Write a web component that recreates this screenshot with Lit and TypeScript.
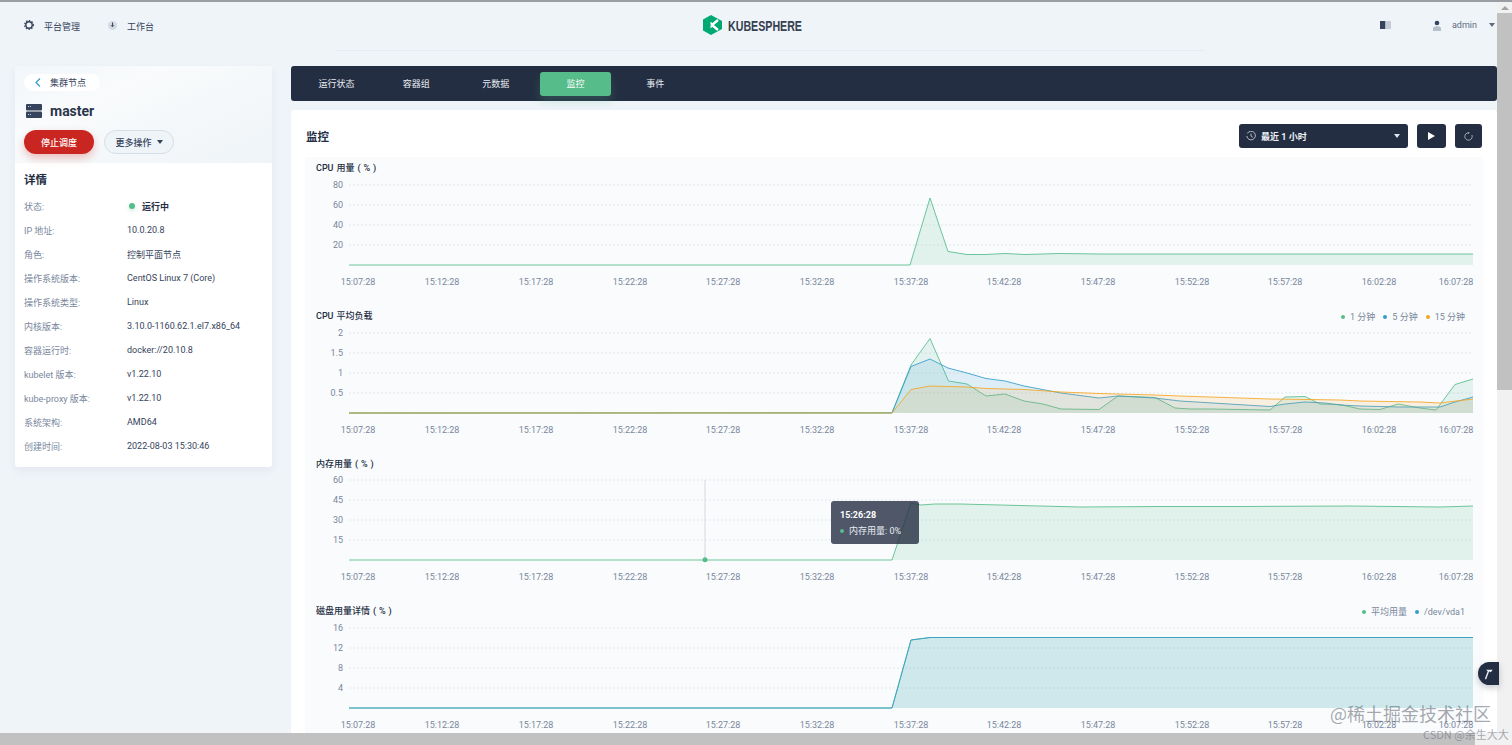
import { LitElement, html, css, svg } from "lit";
import { customElement } from "lit/decorators.js";

type Pt = [number, number];
interface Series { color: string; fill: number; pts: Pt[]; }
interface Chart {
  title: string; top: number; base: number;
  ticks: [string, number][];
  legend: [string, string][];
  series: Series[];
}

const GREEN = "#55bc8a", BLUE = "#329dce", ORANGE = "#f5a623";
const XL: [string, number][] = [
  ["15:07:28", 358], ["15:12:28", 442], ["15:17:28", 536], ["15:22:28", 630],
  ["15:27:28", 723], ["15:32:28", 817], ["15:37:28", 911], ["15:42:28", 1004],
  ["15:47:28", 1098], ["15:52:28", 1192], ["15:57:28", 1285], ["16:02:28", 1379], ["16:07:28", 1456],
];

const CHARTS: Chart[] = [
  {
    title: "CPU 用量 ( % )", top: 157, base: 265,
    ticks: [["80", 185], ["60", 205], ["40", 225], ["20", 245]], legend: [],
    series: [{ color: GREEN, fill: 0.14, pts: [[349, 265], [910, 265], [930, 198], [948, 251.5], [967, 254.5], [985, 254.5], [1005, 253.5], [1025, 254.5], [1060, 253.5], [1100, 254], [1150, 254], [1250, 254], [1350, 254], [1473, 254]] }],
  },
  {
    title: "CPU 平均负载", top: 305, base: 413,
    ticks: [["2", 333], ["1.5", 353], ["1", 373], ["0.5", 393]],
    legend: [["1 分钟", GREEN], ["5 分钟", BLUE], ["15 分钟", ORANGE]],
    series: [
      { color: GREEN, fill: 0.13, pts: [[349, 413], [892, 412.7], [911, 365], [930, 338.5], [948.5, 381], [967, 384], [986, 396], [1005, 394], [1024, 401], [1043, 404], [1061, 409], [1099, 409.5], [1118, 396], [1155, 397.5], [1175, 408], [1190, 409], [1210, 409], [1270, 410], [1285, 397], [1305, 396.5], [1320, 404], [1340, 404.5], [1360, 409], [1380, 409.5], [1398, 404], [1420, 408], [1436, 410], [1455, 384.5], [1473, 379]] },
      { color: BLUE, fill: 0.13, pts: [[349, 413], [892, 413], [911, 366.5], [930, 359], [948, 368], [967, 373], [986, 378.5], [1005, 381], [1024, 386], [1061, 393], [1099, 398], [1118, 396], [1155, 398], [1180, 401], [1270, 406.5], [1285, 404], [1305, 402], [1325, 403], [1340, 405], [1360, 406], [1400, 407], [1440, 407], [1455, 402], [1473, 397]] },
      { color: ORANGE, fill: 0.13, pts: [[349, 413], [892, 413], [911, 389.5], [930, 386], [967, 387], [986, 388.5], [1024, 389.5], [1061, 392], [1099, 393.5], [1155, 395], [1180, 396], [1270, 399], [1310, 399.5], [1340, 400], [1360, 401], [1420, 402], [1440, 403], [1473, 399]] },
    ],
  },
  {
    title: "内存用量 ( % )", top: 453, base: 560,
    ticks: [["60", 480], ["45", 500], ["30", 520], ["15", 540]], legend: [],
    series: [{ color: GREEN, fill: 0.15, pts: [[349, 560], [892, 560], [911, 503], [921, 505], [935, 504], [960, 504], [1000, 505], [1080, 507], [1160, 506.5], [1240, 506.5], [1350, 506], [1440, 507], [1473, 506]] }],
  },
  {
    title: "磁盘用量详情 ( % )", top: 600, base: 708,
    ticks: [["16", 628], ["12", 648], ["8", 668], ["4", 688]],
    legend: [["平均用量", GREEN], ["/dev/vda1", BLUE]],
    series: [
      { color: GREEN, fill: 0.12, pts: [[349, 708], [892, 708], [911, 640], [930, 637.5], [1473, 637.5]] },
      { color: BLUE, fill: 0.12, pts: [[349, 708], [892, 708], [911, 640], [930, 637.5], [1473, 637.5]] },
    ],
  },
];

const DETAILS: [string, string][] = [
  ["IP 地址:", "10.0.20.8"], ["角色:", "控制平面节点"], ["操作系统版本:", "CentOS Linux 7 (Core)"],
  ["操作系统类型:", "Linux"], ["内核版本:", "3.10.0-1160.62.1.el7.x86_64"], ["容器运行时:", "docker://20.10.8"],
  ["kubelet 版本:", "v1.22.10"], ["kube-proxy 版本:", "v1.22.10"], ["系统架构:", "AMD64"], ["创建时间:", "2022-08-03 15:30:46"],
];

@customElement("app-root")
export class AppRoot extends LitElement {
  static styles = css`
    :host { display: grid; grid-template-columns: 1497px 15px; grid-template-rows: 733px 12px; width: 1512px; height: 745px; overflow: hidden; background: #eff4f9; font-family: Roboto, "Noto Sans CJK SC", sans-serif; font-size: 9px; color: #242e42; position: relative; }
    .main { grid-column: 1; grid-row: 1; overflow: hidden; border-top: 2px solid #9a9ea3; box-sizing: border-box; }
    .top { height: 49px; padding-bottom: 3px; box-sizing: border-box; display: grid; grid-template-columns: 1fr auto 1fr; align-items: center; position: relative; }
    .top::after { content: ""; position: absolute; left: 335px; width: 870px; bottom: 0; height: 1px; background: #e6ebf1; }
    .nav { display: flex; align-items: center; padding-left: 24px; gap: 28px; color: #36435c; }
    .nav-item { display: flex; align-items: center; gap: 10px; }
    .nav-item span { padding-top: 3px; }
    .logo { display: flex; align-items: center; gap: 5px; padding-left: 9px; }
    .logo b { display: block; width: 75px; white-space: nowrap; font: 700 15px "Liberation Sans", sans-serif; color: #36404f; transform: scaleX(.71); transform-origin: left center; }
    .user { display: flex; justify-content: flex-end; align-items: center; color: #5f6b7d; padding-right: 2px; }
    .user .book { margin-right: 42px; }
    .user .name { margin: 0 12px 0 11px; }
    .body { display: flex; gap: 19px; padding: 15px 0 0 15px; }
    .side { width: 257px; height: 401px; background: #fff; border-radius: 3px; box-shadow: 0 4px 10px rgba(36,46,66,.06); flex: none; }
    .banner { height: 97px; box-sizing: border-box; padding: 8px 9px 0; background: linear-gradient(155deg, #f2f6fa 0%, #f9fbfc 32%, #f5f8fa 58%, #eff4f8 100%); }
    .back { display: inline-flex; align-items: center; gap: 9px; height: 17px; width: 76px; box-sizing: border-box; padding-left: 11px; background: #fff; border-radius: 9px; color: #36435c; }
    .host { display: flex; align-items: center; gap: 8px; margin: 10px 0 0 2px; font-size: 14px; font-weight: 700; line-height: 20px; color: #2b364b; }
    .acts { display: flex; gap: 10px; margin-top: 9px; }
    .btn { width: 70px; height: 24px; border-radius: 12px; display: flex; align-items: center; justify-content: center; box-sizing: border-box; font-weight: 500; }
    .red { background: #ca2621; color: #fff; box-shadow: 0 4px 8px rgba(202,38,33,.28); }
    .more { background: #eff4f9; border: 1px solid #d8dee5; color: #36435c; gap: 5px; }
    .caret { width: 0; height: 0; border: 3.5px solid transparent; border-top: 4px solid currentColor; border-bottom: 0; }
    .details { padding: 9px 9px 0; }
    .details h3 { margin: 0 0 6px; font-size: 11.5px; font-weight: 600; line-height: 16px; }
    .row { display: grid; grid-template-columns: 103px 1fr; height: 24px; align-items: center; color: #36435c; }
    .row .k { color: #79879c; }
    .status { display: flex; align-items: center; gap: 7px; font-weight: 600; padding-left: 2px; color: #242e42; }
    .status i { width: 6px; height: 6px; background: #55bc8a; border-radius: 50%; box-shadow: 0 2px 4px rgba(85,188,138,.3); }
    .content { width: 1206px; flex: none; }
    .tabs { height: 35px; background: #242e42; border-radius: 3px; display: flex; align-items: center; gap: 8.7px; padding-left: 10px; box-sizing: border-box; }
    .tab { width: 71px; height: 24px; display: flex; align-items: center; justify-content: center; color: #e8edf3; border-radius: 3px; }
    .tab.on { background: #55bc8a; color: #fff; box-shadow: 0 6px 10px rgba(85,188,138,.2); }
    .card { margin-top: 9px; background: #fff; border-radius: 3px 3px 0 0; padding: 14px 14px 0; height: 640px; box-sizing: border-box; }
    .head { display: flex; align-items: center; height: 24px; margin-bottom: 9px; gap: 9px; padding-right: 1px; }
    .head h2 { margin: 0 auto 0 1px; font-size: 11.5px; font-weight: 600; }
    .dark { height: 24px; background: #242e42; border-radius: 3px; display: flex; align-items: center; color: #fff; box-sizing: border-box; justify-content: center; }
    .sel { width: 169px; justify-content: flex-start; padding: 0 8px 0 7px; gap: 5px; font-weight: 700; color: #eef2f6; }
    .sel .caret { margin-left: auto; color: #dfe5ec; }
    .sq { width: 29px; }
    .sq.r { width: 27px; }
    .chart { background: #f9fbfd; position: relative; height: 148px; }
    .chart:nth-last-child(2) { height: 147px; }
    .ch { height: 20px; display: flex; align-items: center; justify-content: space-between; padding: 0 18px 0 11px; }
    .ch b { font-weight: 500; color: #242e42; word-spacing: .7px; }
    .legend { display: flex; gap: 8px; color: #79879c; padding-top: 3px; }
    .legend span { display: flex; align-items: center; gap: 5px; }
    .legend i { width: 4px; height: 4px; border-radius: 50%; }
    svg.plot { display: block; width: 1178px; height: 128px; }
    svg.plot text { font: 9px Roboto, sans-serif; fill: #79879c; }
    .tip { position: absolute; left: 526px; top: 48px; width: 88px; height: 43px; box-sizing: border-box; padding: 6px 9px; border-radius: 3px; background: rgba(36,46,66,.8); color: #e8edf3; line-height: 16px; }
    .tip b { display: block; color: #fff; font-weight: 700; }
    .tip span { display: flex; align-items: center; gap: 5px; }
    .tip i { width: 4px; height: 4px; border-radius: 50%; background: #55bc8a; }
    .vbar { grid-column: 2; grid-row: 1 / 3; background: #f1f1f1; border-top: 2px solid #9a9ea3; display: flex; flex-direction: column; align-items: center; }
    .vbar .thumb { width: 15px; height: 377px; background: #c1c1c1; flex: none; margin-top: 3px; }
    .up { width: 0; height: 0; border: 4px solid transparent; border-bottom: 4px solid #a3a3a3; border-top: 0; margin-top: 4px; }
    .hbar { grid-column: 1; grid-row: 2; background: #f1f1f1; }
    .hbar div { width: 1475px; height: 12px; background: #c1c1c1; }
    .hammer { position: absolute; left: 1478px; top: 662px; width: 21px; height: 23px; background: #242e42; border-radius: 12px 0 0 12px; display: flex; align-items: center; justify-content: center; box-shadow: 0 3px 6px rgba(36,46,66,.25); }
    .wm1 { position: absolute; left: 1330px; top: 702px; font: 18px/22px "Noto Sans CJK SC", sans-serif; color: rgba(90,95,105,.55); white-space: nowrap; }
    .wm2 { position: absolute; left: 1423px; top: 727px; font: 11px/14px "Noto Sans CJK SC", sans-serif; color: rgba(110,115,125,.6); white-space: nowrap; }
  `;

  private plot(c: Chart) {
    const vb = `305 ${c.top + 20} 1178 128`;
    const labelY = c.base + 19.5;
    return html`<svg class="plot" viewBox=${vb}>
      ${c.ticks.map(([t, y]) => svg`
        <line x1="349" x2="1473" y1=${y} y2=${y} stroke="#e1e6ec" stroke-dasharray="2 2"></line>
        <text x="343" y=${y + 3} text-anchor="end">${t}</text>`)}
      ${c.series.map((s) => svg`
        <polygon points=${`${s.pts.map((p) => p.join(",")).join(" ")} 1473,${c.base} 349,${c.base}`} fill=${s.color} fill-opacity=${s.fill}></polygon>
        <polyline points=${s.pts.map((p) => p.join(",")).join(" ")} fill="none" stroke=${s.color} stroke-opacity=".85" stroke-width="1"></polyline>`)}
      ${XL.map(([t, x]) => svg`<text x=${x} y=${labelY} text-anchor="middle">${t}</text>`)}
      ${c.top === 453 ? svg`
        <line x1="705" x2="705" y1="480" y2="560" stroke="#d5dbe2"></line>
        <circle cx="705" cy="559.7" r="2.5" fill="#55bc8a"></circle>` : ""}
    </svg>`;
  }

  render() {
    return html`
      <div class="main">
        <header class="top">
          <nav class="nav">
            <div class="nav-item">
              <svg width="10" height="10" viewBox="0 0 10 10"><circle cx="5" cy="5" r="3.2" fill="none" stroke="#36435c" stroke-width="1.4"></circle><circle cx="5" cy="5" r="4.3" fill="none" stroke="#36435c" stroke-width="1.3" stroke-dasharray="1.4 1.4"></circle></svg>
              <span>平台管理</span>
            </div>
            <div class="nav-item">
              <svg width="9" height="9" viewBox="0 0 9 9"><circle cx="4.5" cy="4.5" r="4.5" fill="#d5dbe2"></circle><path d="M4.5 1.5v3.4M3 4.2l1.5 1.6L6 4.2" fill="none" stroke="#36435c"></path></svg>
              <span>工作台</span>
            </div>
          </nav>
          <div class="logo">
            <svg width="20" height="20" viewBox="0 0 20 20"><path d="M8 0l11 6v8L8 20 0 15.5v-11z" fill="#00a971"></path><path d="M15 5l-6 5 6 5" fill="none" stroke="#fff" stroke-width="2.4"></path><path d="M6 2v16" stroke="#00a971" stroke-width="2"></path><path d="M7.5 7.5L10 10l-2.500 2.500" fill="none" stroke="#fff" stroke-width="1.6"></path></svg>
            <b>KUBESPHERE</b>
          </div>
          <div class="user">
            <svg class="book" width="11" height="8" viewBox="0 0 11 8"><rect width="5.500" height="8" fill="#36435c"></rect><rect x="5.500" width="5.500" height="8" fill="#c5ccd6"></rect></svg>
            <svg width="8" height="11" viewBox="0 0 8 11"><circle cx="4" cy="3" r="2.300" fill="#36435c"></circle><path d="M0 11V8.500C0 7 1.500 6.200 4 6.200S8 7 8 8.500V11z" fill="#b6bec9"></path></svg>
            <span class="name">admin</span>
            <span class="caret"></span>
          </div>
        </header>
        <div class="body">
          <aside class="side">
            <div class="banner">
              <div class="back">
                <svg width="6" height="9" viewBox="0 0 6 9"><path d="M5 .5L1 4.500l4 4" fill="none" stroke="#329dce" stroke-width="1.200"></path></svg>
                集群节点
              </div>
              <div class="host">
                <svg width="16" height="14" viewBox="0 0 16 14"><rect width="16" height="6.500" rx="1" fill="#36435c"></rect><rect y="7.500" width="16" height="6.500" rx="1" fill="#36435c"></rect><path d="M2 2.500h3M2 10.500h3" stroke="#c5ccd6" stroke-dasharray="1 1"></path></svg>
                master
              </div>
              <div class="acts">
                <div class="btn red">停止调度</div>
                <div class="btn more">更多操作 <span class="caret"></span></div>
              </div>
            </div>
            <div class="details">
              <h3>详情</h3>
              <div class="row"><span class="k">状态:</span><span class="status"><i></i>运行中</span></div>
              ${DETAILS.map(([k, v]) => html`<div class="row"><span class="k">${k}</span><span>${v}</span></div>`)}
            </div>
          </aside>
          <section class="content">
            <div class="tabs">
              <div class="tab">运行状态</div>
              <div class="tab">容器组</div>
              <div class="tab">元数据</div>
              <div class="tab on">监控</div>
              <div class="tab">事件</div>
            </div>
            <div class="card">
              <div class="head">
                <h2>监控</h2>
                <div class="dark sel">
                  <svg width="10" height="10" viewBox="0 0 10 10"><path d="M1.300 2.500A4.300 4.300 0 1 1 .8 5" fill="none" stroke="#c5ccd6" stroke-width=".9"></path><path d="M5 2.500V5l1.800 1.300" fill="none" stroke="#c5ccd6" stroke-width=".9"></path></svg>
                  最近 1 小时
                  <span class="caret"></span>
                </div>
                <div class="dark sq"><svg width="7" height="8" viewBox="0 0 7 8"><path d="M0 0l7 4-7 4z" fill="#fff"></path></svg></div>
                <div class="dark sq r"><svg width="9" height="9" viewBox="0 0 9 9"><path d="M7.900 3A3.700 3.700 0 1 1 4.800 .8" fill="none" stroke="#aeb7c3" stroke-width=".9"></path><path d="M3.800 0L5.400 .8 4 1.900" fill="none" stroke="#aeb7c3" stroke-width=".7"></path></svg></div>
              </div>
              ${CHARTS.map((c) => html`
                <div class="chart">
                  <div class="ch">
                    <b>${c.title}</b>
                    ${c.legend.length ? html`<div class="legend">${c.legend.map(([t, col]) => html`<span><i style="background:${col}"></i>${t}</span>`)}</div>` : ""}
                  </div>
                  ${this.plot(c)}
                  ${c.top === 453 ? html`<div class="tip"><b>15:26:28</b><span><i></i>内存用量: 0%</span></div>` : ""}
                </div>`)}
            </div>
          </section>
        </div>
      </div>
      <div class="vbar"><span class="up"></span><div class="thumb"></div></div>
      <div class="hbar"><div></div></div>
      <div class="hammer"><svg width="11" height="12" viewBox="0 0 9 10"><path d="M2.500 1.500h5.500L6.500 3.500 5 3 2.500 9.500 1.500 9 3.800 2.800z" fill="#e8edf3"></path></svg></div>
      <div class="wm1">@稀土掘金技术社区</div>
      <div class="wm2">CSDN @余生大大</div>
    `;
  }
}
